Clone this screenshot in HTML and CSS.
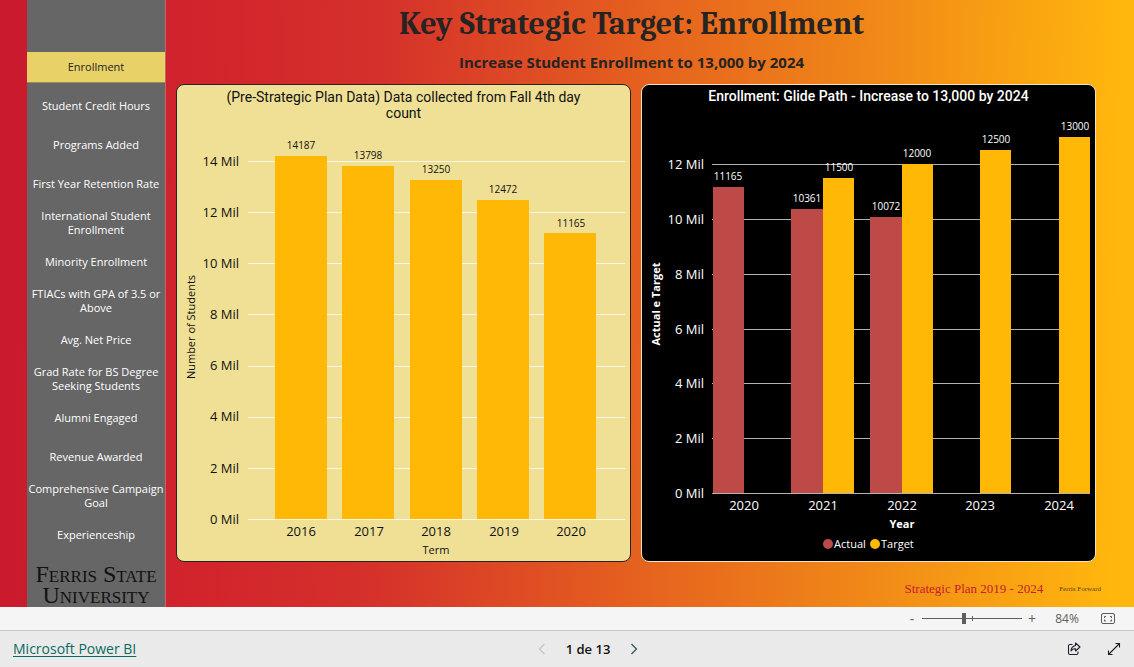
FILE: index.html
```html
<!DOCTYPE html>
<html lang="en">
<head>
<meta charset="utf-8">
<meta name="viewport" content="width=device-width, initial-scale=1">
<title>Key Strategic Target: Enrollment</title>
<link rel="stylesheet" href="styles.css">
</head>
<body>
<main class="report">
  <nav class="sidebar" aria-label="Report pages">
    <button class="tab tab-active" type="button">Enrollment</button>
    <button class="tab" type="button">Student Credit Hours</button>
    <button class="tab" type="button">Programs Added</button>
    <button class="tab" type="button">First Year Retention Rate</button>
    <button class="tab" type="button">International Student Enrollment</button>
    <button class="tab" type="button">Minority Enrollment</button>
    <button class="tab" type="button">FTIACs with GPA of 3.5 or Above</button>
    <button class="tab" type="button">Avg. Net Price</button>
    <button class="tab" type="button">Grad Rate for BS Degree Seeking Students</button>
    <button class="tab" type="button">Alumni Engaged</button>
    <button class="tab" type="button">Revenue Awarded</button>
    <button class="tab" type="button">Comprehensive Campaign Goal</button>
    <button class="tab" type="button">Experienceship</button>
    <div class="brand">Ferris State<br>University</div>
  </nav>
  <div class="content">
    <header class="heading">
      <h1 class="title">Key Strategic Target: Enrollment</h1>
      <p class="subtitle">Increase Student Enrollment to 13,000 by 2024</p>
    </header>
    <div class="charts">
      <section class="card card-light">
        <h2 class="card-title">(Pre-Strategic Plan Data) Data collected from Fall 4th day count</h2>
        <svg class="chart" viewBox="0 0 453 440" role="img" aria-label="Number of students by term">
          <path class="grid" d="M71 40.5H448M71 91.5H448M71 142.5H448M71 193.5H448M71 245.5H448M71 296.5H448M71 347.5H448M71 398.5H448"/>
          <g class="target">
            <rect x="98" y="35" width="52" height="363"/>
            <rect x="165" y="45" width="52" height="353"/>
            <rect x="233" y="59" width="52" height="339"/>
            <rect x="300" y="79" width="52" height="319"/>
            <rect x="367" y="112" width="52" height="286"/>
          </g>
          <g class="tick tick-y">
            <text x="62" y="45">14 Mil</text><text x="62" y="96">12 Mil</text>
            <text x="62" y="147">10 Mil</text><text x="62" y="198">8 Mil</text>
            <text x="62" y="249">6 Mil</text><text x="62" y="300">4 Mil</text>
            <text x="62" y="352">2 Mil</text><text x="62" y="403">0 Mil</text>
          </g>
          <g class="tick">
            <text x="124" y="415">2016</text><text x="192" y="415">2017</text>
            <text x="259" y="415">2018</text><text x="327" y="415">2019</text>
            <text x="394" y="415">2020</text>
          </g>
          <g class="value">
            <text x="124" y="28">14187</text><text x="191" y="38">13798</text>
            <text x="259" y="52">13250</text><text x="326" y="72">12472</text>
            <text x="394" y="106">11165</text>
          </g>
          <text class="axis" x="259" y="433">Term</text>
          <text class="axis" transform="translate(18 206) rotate(-90)">Number of Students</text>
        </svg>
      </section>
      <section class="card card-dark">
        <h2 class="card-title">Enrollment: Glide Path - Increase to 13,000 by 2024</h2>
        <svg class="chart" viewBox="0 0 453 440" role="img" aria-label="Actual and target enrollment by year">
          <path class="grid" d="M70 43.5H448M70 98.5H448M70 153.5H448M70 208.5H448M70 262.5H448M70 317.5H448M70 372.5H448"/>
          <g class="actual">
            <rect x="71" y="66" width="31" height="306"/>
            <rect x="149" y="88" width="32" height="284"/>
            <rect x="228" y="96" width="32" height="276"/>
          </g>
          <g class="target">
            <rect x="181" y="57" width="31" height="315"/>
            <rect x="260" y="43" width="31" height="329"/>
            <rect x="338" y="29" width="31" height="343"/>
            <rect x="417" y="16" width="31" height="356"/>
          </g>
          <g class="tick tick-y">
            <text x="62" y="48">12 Mil</text><text x="62" y="103">10 Mil</text>
            <text x="62" y="158">8 Mil</text><text x="62" y="213">6 Mil</text>
            <text x="62" y="267">4 Mil</text><text x="62" y="322">2 Mil</text>
            <text x="62" y="377">0 Mil</text>
          </g>
          <g class="tick">
            <text x="102" y="389">2020</text><text x="181" y="389">2021</text>
            <text x="260" y="389">2022</text><text x="338" y="389">2023</text>
            <text x="417" y="389">2024</text>
          </g>
          <g class="value">
            <text x="86" y="59">11165</text><text x="165" y="81">10361</text>
            <text x="197" y="50">11500</text><text x="244" y="89">10072</text>
            <text x="275" y="36">12000</text><text x="354" y="22">12500</text>
            <text x="433" y="9">13000</text>
          </g>
          <text class="axis" x="260" y="407">Year</text>
          <text class="axis" transform="translate(18 183) rotate(-90)">Actual e Target</text>
          <circle class="actual" cx="186" cy="423" r="5"/>
          <text class="legend" x="192" y="427">Actual</text>
          <circle class="target" cx="233" cy="423" r="5"/>
          <text class="legend" x="239" y="427">Target</text>
        </svg>
      </section>
    </div>
    <div class="tagline">
      <span class="plan">Strategic Plan 2019 - 2024</span>
      <span class="motto">Ferris Forward</span>
    </div>
  </div>
</main>
<div class="zoombar">
  <button class="zoom-step" type="button" aria-label="Zoom out">-</button>
  <input class="zoom-range" type="range" min="0" max="100" value="42" aria-label="Zoom level">
  <button class="zoom-step" type="button" aria-label="Zoom in">+</button>
  <span class="zoom-value">84%</span>
  <button class="icon-button" type="button" aria-label="Fit to page">
    <svg width="16" height="12" viewBox="0 0 16 12" fill="none" stroke="#605e5c"><rect x="1.5" y=".5" width="13" height="10" rx="1.5"/><path d="M6 3.5H4.5V5M4.5 6.500V8H6M10 3.500H11.500V5M11.500 6.500V8H10"/></svg>
  </button>
</div>
<footer class="footer">
  <a class="product" href="#">Microsoft Power BI</a>
  <div class="pager">
    <button class="icon-button" type="button" aria-label="Previous page" disabled>
      <svg width="8" height="12" viewBox="0 0 8 12" fill="none" stroke="#c4c4c4" stroke-width="1.200"><path d="M6.500 1L1.500 6L6.500 11"/></svg>
    </button>
    <span class="page-number">1 de 13</span>
    <button class="icon-button" type="button" aria-label="Next page">
      <svg width="8" height="12" viewBox="0 0 8 12" fill="none" stroke="#294f5c" stroke-width="1.200"><path d="M1.500 1L6.500 6L1.500 11"/></svg>
    </button>
  </div>
  <div class="actions">
    <button class="icon-button" type="button" aria-label="Share">
      <svg width="14" height="14" viewBox="0 0 14 14" fill="none" stroke="#201f2b" stroke-width="1.100" stroke-linejoin="round"><path d="M5.500 2.500H3Q1.500 2.500 1.500 4V11Q1.500 12.500 3 12.500H9.500Q11 12.500 11 11V9.500"/><path d="M8.500 1L13 5L8.500 9V6.800Q5.500 6.600 4 9Q4.200 4.500 8.500 3.500Z"/></svg>
    </button>
    <button class="icon-button" type="button" aria-label="Full screen">
      <svg width="14" height="14" viewBox="0 0 14 14" fill="none" stroke="#201f1e" stroke-width="1.100"><path d="M1.500 12.500L12.500 1.500M8.500 1.500H12.500V5.500M1.500 8.500V12.500H5.500"/></svg>
    </button>
  </div>
</footer>
</body>
</html>
```
FILE: styles.css
```css
* { box-sizing: border-box; }

body {
  margin: 0;
  min-height: 100vh;
  display: flex;
  flex-direction: column;
  font-family: "Segoe UI", "Open Sans", sans-serif;
  background: #eaeaea;
}

button {
  border: 0;
  padding: 0;
  background: none;
  font: inherit;
  color: inherit;
}

h1, h2, p { margin: 0; }

.report {
  flex: 1;
  display: flex;
  padding-left: 27px;
  background: linear-gradient(91deg, #c91a2e 0%, #d1242c 18%, #d5302b 33%, #e5601f 56%, #f18b17 78%, #ffb60d 98%);
}

.sidebar {
  flex: 0 0 139px;
  display: flex;
  flex-direction: column;
  gap: 9px;
  padding-top: 52px;
  background: #666;
  border-right: 1px solid #c06a66;
}

.tab {
  height: 30px;
  color: #fff;
  font-size: 11px;
  line-height: 14px;
}

.tab-active {
  color: #252423;
  background: #e8d166;
  box-shadow: 0 1px 0 #958d60;
}

.brand {
  margin-top: 5px;
  font-family: "Liberation Serif", serif;
  font-size: 24px;
  line-height: 21px;
  font-variant: small-caps;
  text-align: center;
  white-space: nowrap;
  color: #111;
}

.content {
  flex: 1;
  min-width: 0;
  padding: 0 38px 0 10px;
  display: flex;
  flex-direction: column;
}

.heading {
  padding: 4px 9px 0 0;
  text-align: center;
  color: #252423;
}

.title {
  font-family: Cambria, "Liberation Serif", serif;
  font-size: 32px;
  line-height: 40px;
}

.subtitle {
  height: 40px;
  padding-top: 8px;
  font-size: 15px;
  line-height: 20px;
  font-weight: 700;
}

.charts {
  display: grid;
  grid-template-columns: 1fr 1fr;
  gap: 10px;
}

.card {
  border: 1px solid #252423;
  border-radius: 8px;
}

.card-light {
  background: #efe096;
  color: #111;
}

.card-dark {
  background: #000;
  border-color: #f2e3c8;
  color: #fff;
}

.card-title {
  height: 36px;
  padding: 4px 40px 0;
  font-family: Roboto, sans-serif;
  font-size: 14px;
  line-height: 16px;
  font-weight: 400;
  text-align: center;
}

.card-dark .card-title {
  padding-top: 3px;
  font-weight: 500;
}

.chart {
  display: block;
  width: 100%;
  overflow: visible;
}

.chart text {
  fill: currentColor;
  text-anchor: middle;
}

.grid { stroke: #fbf6e0; }
.card-dark .grid { stroke: #b3b3b3; }
.target { fill: #ffb805; }
.actual { fill: #be4a47; }
.tick { font-size: 13px; }
.value { font-size: 10px; }
.axis { font-size: 11px; }
.legend { font-size: 11px; }
.chart .tick-y text { text-anchor: end; }
.chart .legend { text-anchor: start; }
.card-dark .axis { font-weight: 700; }

.tagline {
  display: flex;
  justify-content: flex-end;
  align-items: center;
  gap: 16px;
  height: 45px;
  padding-top: 8px;
  margin-right: -5px;
  font-family: "Palatino Linotype", "Liberation Serif", serif;
}

.plan {
  font-size: 13px;
  color: #c4202f;
}

.motto {
  font-size: 7px;
  color: #574218;
}

.zoombar {
  display: flex;
  align-items: center;
  justify-content: flex-end;
  height: 24px;
  padding-right: 18px;
  background: #f5f5f5;
  border-bottom: 1px solid #c8c8c8;
  color: #605e5c;
}

.zoom-step {
  width: 20px;
  font-size: 14px;
  line-height: 20px;
}

.zoom-range {
  appearance: none;
  width: 100px;
  height: 12px;
  margin: 0;
  background:
    linear-gradient(#605e5c, #605e5c) 50px center / 1px 5px no-repeat,
    linear-gradient(#605e5c, #605e5c) center / 100% 1px no-repeat;
}

.zoom-range::-webkit-slider-thumb {
  appearance: none;
  width: 4px;
  height: 11px;
  background: #605e5c;
}

.zoom-value {
  width: 50px;
  font-size: 12px;
  text-align: center;
}

.icon-button {
  display: flex;
  align-items: center;
}

.zoombar .icon-button { margin-left: 8px; }

.footer {
  display: grid;
  grid-template-columns: 1fr auto 1fr;
  align-items: center;
  height: 36px;
  padding: 0 13px;
}

.product {
  justify-self: start;
  font-size: 14px;
  line-height: 20px;
  color: #0b6a60;
  text-underline-offset: 2px;
}

.pager {
  display: flex;
  align-items: center;
  gap: 20px;
  margin-left: 42px;
}

.page-number {
  font-size: 13px;
  line-height: 20px;
  font-weight: 600;
  color: #111;
}

.actions {
  display: flex;
  justify-content: flex-end;
  gap: 26px;
}
```
